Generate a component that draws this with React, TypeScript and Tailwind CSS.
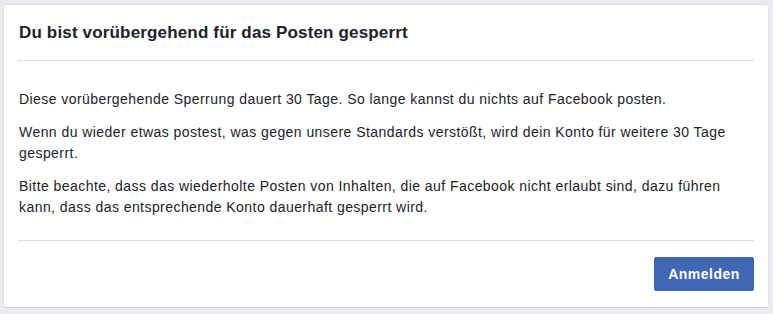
export default function App() {
  return (
    <div className="min-h-[314px] w-[773px] bg-[#e9ebee] pt-[4px] pl-[3px] font-['Liberation_Sans',Arial,sans-serif] text-[#1d2129]">
      <div className="flex h-[304px] w-[766px] flex-col rounded-[3px] border border-[#dddfe2] border-b-[#ccd0d5] bg-white">
        <div className="mx-[14px] flex h-[56px] items-center border-b border-[#dadde1] pl-[1px]">
          <h1 className="text-[17px] font-bold leading-[20px] tracking-[0.16px]">Du bist vorübergehend für das Posten gesperrt</h1>
        </div>

        <div className="mx-[14px] h-[180px] border-b border-[#dadde1] pt-[28px] pl-[1px] text-[14px] leading-[21px] tracking-[0.44px]">
          <p className="mb-[12px]">Diese vorübergehende Sperrung dauert 30 Tage. So lange kannst du nichts auf Facebook posten.</p>
          <p className="mb-[12px]">Wenn du wieder etwas postest, was gegen unsere Standards verstößt, wird dein Konto für weitere 30 Tage gesperrt.</p>
          <p>Bitte beachte, dass das wiederholte Posten von Inhalten, die auf Facebook nicht erlaubt sind, dazu führen kann, dass das entsprechende Konto dauerhaft gesperrt wird.</p>
        </div>

        <div className="flex justify-end px-[14px] pt-[16px]">
          <button className="flex h-[34px] w-[100px] items-center justify-center rounded-[2px] border border-[#4267b2] bg-[#4267b2] text-[14px] font-bold tracking-[0.5px] text-white">
            Anmelden
          </button>
        </div>
      </div>
    </div>
  )
}
